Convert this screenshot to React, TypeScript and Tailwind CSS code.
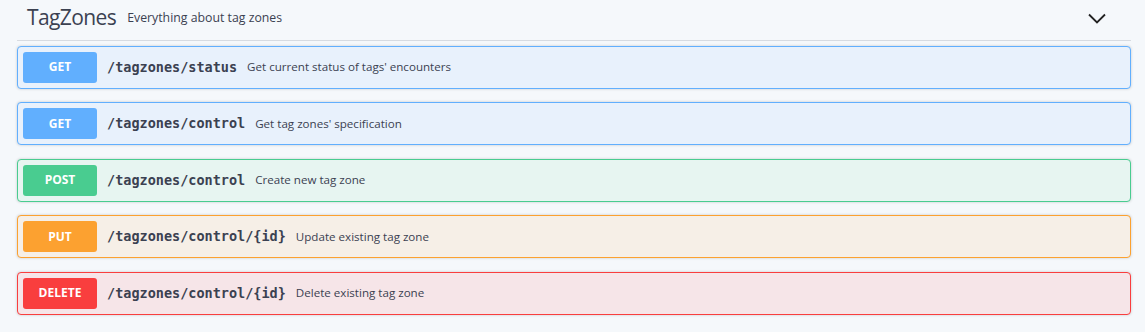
import { ReactNode } from 'react';

// Operation rows for the TagZones section
interface Op {
  method: 'GET' | 'POST' | 'PUT' | 'DELETE';
  path: ReactNode;
  summary: string;
}

const styles = {
  GET: { block: 'bg-[#e8f1fc] border-[#61affe]', badge: 'bg-[#61affe]' },
  POST: { block: 'bg-[#e7f5f1] border-[#49cc90]', badge: 'bg-[#49cc90]' },
  PUT: { block: 'bg-[#f6efe7] border-[#fca130]', badge: 'bg-[#fca130]' },
  DELETE: { block: 'bg-[#f6e5e8] border-[#f93e3e]', badge: 'bg-[#f93e3e]' },
};

const ops: Op[] = [
  { method: 'GET', path: '/tagzones/status', summary: "Get current status of tags' encounters" },
  { method: 'GET', path: '/tagzones/control', summary: "Get tag zones' specification" },
  { method: 'POST', path: '/tagzones/control', summary: 'Create new tag zone' },
  { method: 'PUT', path: '/tagzones/control/{id}', summary: 'Update existing tag zone' },
  { method: 'DELETE', path: '/tagzones/control/{id}', summary: 'Delete existing tag zone' },
];

export default function App() {
  return (
    <div className="w-[1145px] h-[332px] bg-[#f5f8fb] pl-[17px] pr-[14px] overflow-hidden font-['Open_Sans',sans-serif] text-[#3b4151]">
      {/* Tag header */}
      <div className="h-[41px] flex items-center border-b border-[#d7dbe1] pl-[10px] pr-[25px]">
        <h3 className="text-[21px] leading-none mb-[5px] tracking-[-0.6px]">TagZones</h3>
        <span className="text-[12.3px] ml-[11px] mb-[3px]">Everything about tag zones</span>
        <svg className="ml-auto mb-[4px]" width="18" height="11" viewBox="0 0 18 11">
          <path d="M1 1.5 L9 9.5 L17 1.5" fill="none" stroke="#222" strokeWidth="1.8" />
        </svg>
      </div>

      {/* Operations */}
      <div className="flex flex-col gap-[13.5px] pt-[4.5px]">
        {ops.map((op, i) => (
          <div
            key={i}
            className={`h-[43px] border rounded-[4px] shadow-[0_0_3px_rgba(0,0,0,0.19)] flex items-center px-[5px] ${styles[op.method].block}`}
          >
            <span
              className={`w-[74px] h-[31px] rounded-[3px] flex items-center justify-center text-white text-[12px] font-bold ${styles[op.method].badge}`}
            >
              {op.method}
            </span>
            <span className="ml-[10px] font-['DejaVu_Sans_Mono',monospace] font-bold text-[13.5px] text-[#3b4151]">
              {op.path}
            </span>
            <span className="ml-[10px] text-[11.6px] text-[#3b4151]">{op.summary}</span>
          </div>
        ))}
      </div>
    </div>
  );
}
